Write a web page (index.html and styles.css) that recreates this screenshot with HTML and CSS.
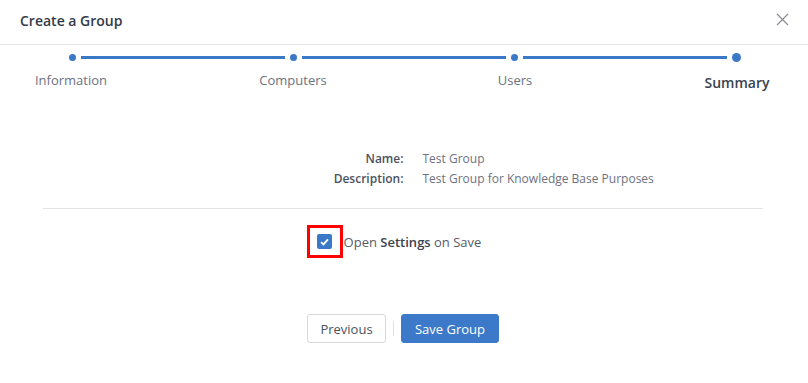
FILE: index.html
```html
<!DOCTYPE html>
<html lang="en">
<head>
  <meta charset="UTF-8" />
  <meta name="viewport" content="width=device-width, initial-scale=1.0"/>
  <title>Create a Group</title>
  <link rel="stylesheet" href="styles.css">
</head>
<body>
  <div class="modal">
    <div class="modal-header">
      <h2>Create a Group</h2>
      <button class="close" aria-label="Close">
        <svg width="13" height="13" viewBox="0 0 13 13">
          <path d="M1 1 L12 12 M12 1 L1 12" stroke="#8a8d91" stroke-width="1.3" fill="none"/>
        </svg>
      </button>
    </div>

    <div class="stepper">
      <div class="track">
        <span class="dot"></span>
        <span class="line"></span>
        <span class="dot"></span>
        <span class="line"></span>
        <span class="dot"></span>
        <span class="line"></span>
        <span class="dot dot-active"></span>
      </div>
      <div class="labels">
        <span class="label"><span>Information</span></span>
        <span class="label"><span>Computers</span></span>
        <span class="label"><span>Users</span></span>
        <span class="label label-active"><span>Summary</span></span>
      </div>
    </div>

    <div class="details">
      <div class="key">Name:</div>
      <div class="value">Test Group</div>
      <div class="key">Description:</div>
      <div class="value">Test Group for Knowledge Base Purposes</div>
    </div>

    <hr class="divider">

    <div class="option">
      <span class="highlight">
        <span class="checkbox">
          <svg width="9" height="8" viewBox="0 0 9 8">
            <path d="M1 4.2 L3.4 6.4 L8 1.4" stroke="#fff" stroke-width="1.8" fill="none"/>
          </svg>
        </span>
      </span>
      <span class="option-text">Open <strong>Settings</strong> on Save</span>
    </div>

    <div class="actions">
      <button class="btn btn-default">Previous</button>
      <span class="sep"></span>
      <button class="btn btn-primary">Save Group</button>
    </div>
  </div>
</body>
</html>
```

FILE: styles.css
```css
body {
  margin: 0;
  font-family: "Open Sans", "Noto Sans", sans-serif;
  background: #fff;
  color: #3a4250;
}
.modal {
  width: 808px;
  height: 383px;
  background: #fff;
}
.modal-header {
  height: 45px;
  border-bottom: 1px solid #e6e6e6;
  display: flex;
  align-items: center;
  justify-content: space-between;
  padding: 0 20px;
  box-sizing: border-box;
}
.modal-header h2 {
  margin: 0;
  font-size: 14px;
  font-weight: 600;
  color: #333b47;
  margin-top: -4px;
}
.close {
  background: none;
  border: none;
  padding: 0;
  margin-right: -1px;
  margin-top: -2px;
  cursor: pointer;
}
.stepper {
  padding-top: 7px;
}
.track {
  display: flex;
  align-items: center;
  margin: 0 67px 0 69px;
  gap: 5px;
  height: 10px;
}
.dot {
  width: 7px;
  height: 7px;
  border-radius: 50%;
  background: #3c78c8;
}
.dot-active {
  width: 9px;
  height: 9px;
}
.line {
  flex: 1;
  height: 3px;
  background: #3c78c8;
}
.labels {
  display: flex;
  justify-content: space-between;
  margin: 9px 71px 0 71px;
}
.label {
  width: 0;
  display: flex;
  justify-content: center;
  white-space: nowrap;
  font-size: 13px;
  color: #6c7280;
  line-height: 18px;
}
.label-active {
  font-size: 14px;
  font-weight: 600;
  color: #3a4250;
  padding-top: 3px;
}
.details {
  display: grid;
  grid-template-columns: 1fr 1fr;
  column-gap: 19px;
  row-gap: 2px;
  margin-top: 58px;
  font-size: 12px;
  line-height: 18px;
}
.key {
  text-align: right;
  font-weight: 600;
  color: #4a5260;
  margin-right: -9px;
}
.value {
  color: #6c7280;
  margin-left: 9px;
}
.divider {
  border: none;
  border-top: 1px solid #e3e3e3;
  margin: 20px 45px 0 43px;
}
.option {
  display: flex;
  align-items: center;
  justify-content: center;
  margin-top: 16px;
  padding-right: 20px;
}
.highlight {
  border: 3px solid #f00;
  width: 30px;
  height: 27px;
  display: flex;
  align-items: center;
  justify-content: center;
}
.checkbox {
  width: 15px;
  height: 15px;
  border-radius: 2px;
  background: #3c78c8;
  display: flex;
  align-items: center;
  justify-content: center;
}
.option-text {
  font-size: 13px;
  color: #555c68;
  margin-left: 1px;
}
.option-text strong {
  font-weight: 600;
  color: #3a4250;
}
.actions {
  display: flex;
  align-items: center;
  justify-content: center;
  gap: 7px;
  margin-top: 56px;
  padding-right: 2px;
}
.btn {
  font-family: inherit;
  font-size: 13px;
  height: 29px;
  border-radius: 3px;
  cursor: pointer;
}
.btn-default {
  background: #fff;
  border: 1px solid #d8d8d8;
  color: #4a5260;
  width: 79px;
}
.btn-primary {
  background: #3d79c9;
  border: 1px solid #3d79c9;
  color: #fff;
  width: 98px;
  font-weight: 500;
}
.sep {
  width: 1px;
  height: 15px;
  background: #e0e0e0;
}
```
